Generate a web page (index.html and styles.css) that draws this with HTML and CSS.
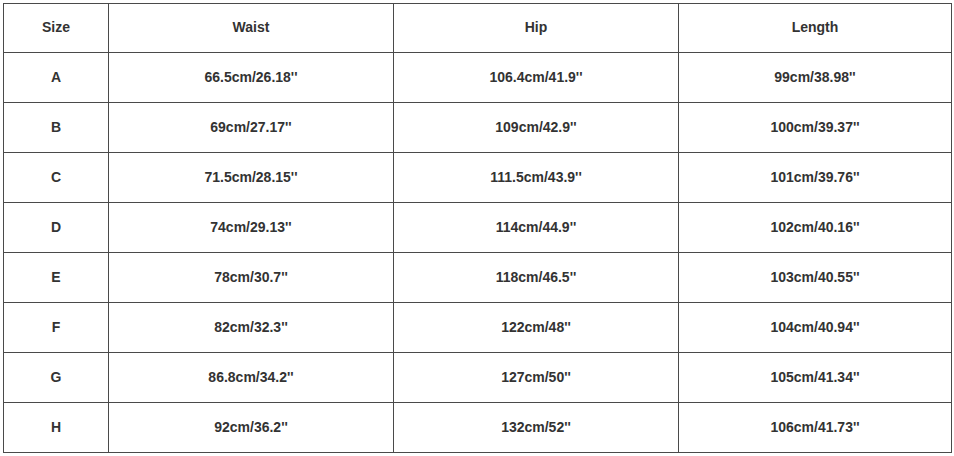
FILE: index.html
```html
<!DOCTYPE html>
<html>
<head>
<meta charset="utf-8">
<link rel="stylesheet" href="styles.css">
</head>
<body>
<div class="wrap">
<table class="size-table">
<colgroup>
<col class="c-size"><col class="c-waist"><col class="c-hip"><col class="c-len">
</colgroup>
<thead>
<tr class="head"><td>Size</td><td>Waist</td><td>Hip</td><td>Length</td></tr>
</thead>
<tbody>
<tr><td>A</td><td>66.5cm/26.18''</td><td>106.4cm/41.9''</td><td>99cm/38.98''</td></tr>
<tr><td>B</td><td>69cm/27.17''</td><td>109cm/42.9''</td><td>100cm/39.37''</td></tr>
<tr><td>C</td><td>71.5cm/28.15''</td><td>111.5cm/43.9''</td><td>101cm/39.76''</td></tr>
<tr><td>D</td><td>74cm/29.13''</td><td>114cm/44.9''</td><td>102cm/40.16''</td></tr>
<tr><td>E</td><td>78cm/30.7''</td><td>118cm/46.5''</td><td>103cm/40.55''</td></tr>
<tr><td>F</td><td>82cm/32.3''</td><td>122cm/48''</td><td>104cm/40.94''</td></tr>
<tr><td>G</td><td>86.8cm/34.2''</td><td>127cm/50''</td><td>105cm/41.34''</td></tr>
<tr><td>H</td><td>92cm/36.2''</td><td>132cm/52''</td><td>106cm/41.73''</td></tr>
</tbody>
</table>
</div>
</body>
</html>
```
FILE: styles.css
```css
html, body {
  margin: 0;
  padding: 0;
  background: #fff;
}
.wrap {
  padding: 3px 0 0 3px;
}
.size-table {
  border-collapse: collapse;
  table-layout: fixed;
  width: 948px;
  font-family: "Liberation Sans", Arial, sans-serif;
  font-size: 14px;
  font-weight: bold;
  color: #333;
}
.c-size { width: 105px; }
.c-waist { width: 285px; }
.c-hip { width: 285px; }
.c-len { width: 273px; }
.size-table td {
  border: 1px solid #4a4a4a;
  height: 47px;
  padding: 0 0 2px;
  text-align: center;
  vertical-align: middle;
}
.size-table .head td {
  height: 46px;
}
```
